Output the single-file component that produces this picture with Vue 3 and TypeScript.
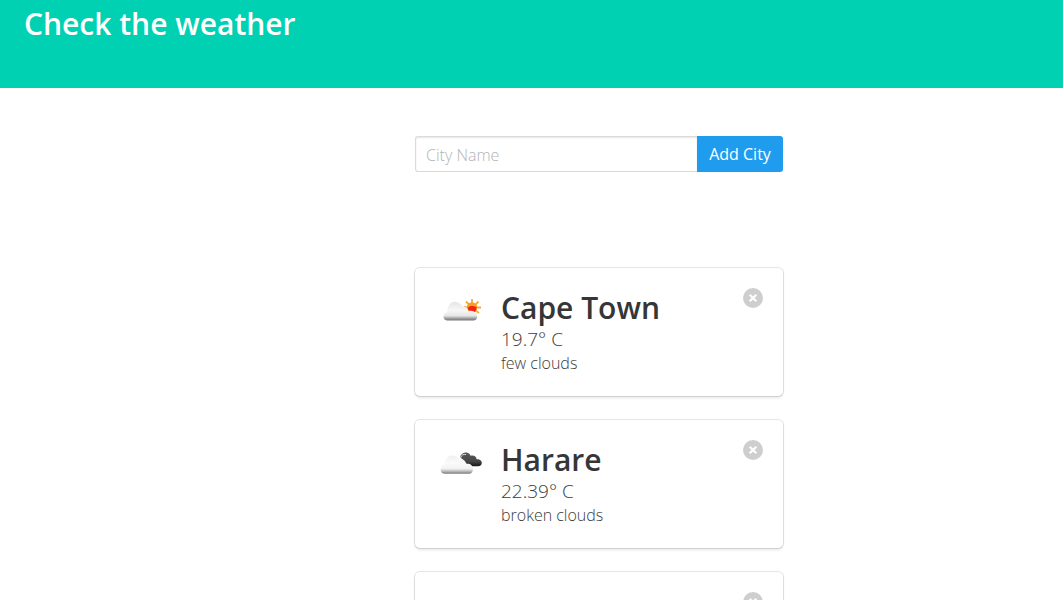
<script setup lang="ts">
import { ref } from 'vue'

interface CityWeather {
  id: number
  name?: string
  temperature?: string
  summary?: string
  icon?: 'few' | 'broken'
}

const draft = ref('')
const cities = ref<CityWeather[]>([
  { id: 1, name: 'Cape Town', temperature: '19.7° C', summary: 'few clouds', icon: 'few' },
  { id: 2, name: 'Harare', temperature: '22.39° C', summary: 'broken clouds', icon: 'broken' },
  { id: 3 },
])

function addCity(): void {
  const name = draft.value.trim()
  if (!name) return
  cities.value.push({ id: Date.now(), name })
  draft.value = ''
}

function removeCity(id: number): void {
  cities.value = cities.value.filter((city) => city.id !== id)
}
</script>

<template>
  <div class="page">
    <header class="hero">
      <h1 class="hero-title">Check the weather</h1>
    </header>

    <main class="layout">
      <div class="column">
        <form class="add-form" @submit.prevent="addCity">
          <input v-model="draft" class="city-input" type="text" placeholder="City Name" aria-label="City Name" />
          <button class="add-button" type="submit">Add City</button>
        </form>

        <section class="cards">
          <article v-for="city in cities" :key="city.id" class="card">
            <div class="figure">
              <svg v-if="city.icon === 'few'" viewBox="0 0 50 50" aria-hidden="true">
                <defs>
                  <linearGradient id="few-cloud" x1="0" y1="0" x2="0" y2="1">
                    <stop offset="0" stop-color="#e4e4e4" />
                    <stop offset="0.45" stop-color="#f7f7f7" />
                    <stop offset="0.75" stop-color="#e6e6e6" />
                    <stop offset="0.88" stop-color="#a2a2a2" />
                    <stop offset="1" stop-color="#747474" />
                  </linearGradient>
                </defs>
                <path
                  d="M37 11v5M31 13.500l3 3M43.500 13.500l-3 3M46 19.500h-5M44 25l-3.500-2.500M38 28v-5M29 18.500l4 1"
                  fill="none"
                  stroke="#f6a93b"
                  stroke-width="1.800"
                />
                <circle cx="37" cy="19.500" r="5.200" fill="#fa9a28" />
                <path d="M33 19.500C35 17.500 39 17.500 41.500 19.500C41.500 22.500 40 24.500 37.500 24.500C35 24.500 33 22.500 33 19.500Z" fill="#f32412" />
                <path
                  d="M12 32.500C9.700 32.500 8.400 30.700 8.400 28.600C8.400 26.400 9.900 24.900 12 24.500C12.100 18.400 15.400 13.800 20 13.800C23.500 13.800 26 16 27.200 18.300C30.400 18 32.700 20 33 23C36.600 22.100 42.300 23.800 42.300 28C42.300 31 40.700 32.500 38 32.500Z"
                  fill="url(#few-cloud)"
                />
              </svg>
              <svg v-else-if="city.icon === 'broken'" viewBox="0 0 50 50" aria-hidden="true">
                <defs>
                  <linearGradient id="broken-cloud" x1="0" y1="0" x2="0" y2="1">
                    <stop offset="0" stop-color="#f0f0f0" />
                    <stop offset="0.4" stop-color="#fbfbfb" />
                    <stop offset="0.72" stop-color="#f2f2f2" />
                    <stop offset="0.86" stop-color="#bcbcbc" />
                    <stop offset="1" stop-color="#777777" />
                  </linearGradient>
                  <linearGradient id="dark-cloud" x1="0" y1="0" x2="0" y2="1">
                    <stop offset="0" stop-color="#5b5b5b" />
                    <stop offset="0.65" stop-color="#454545" />
                    <stop offset="1" stop-color="#181818" />
                  </linearGradient>
                </defs>
                <path
                  d="M25 17.500C25.500 14.500 28.500 12.200 31.500 12.600C34 12.900 35.200 14.500 35.500 15.800C38.300 14.700 41.700 16.500 41.600 19.200C44.500 18.800 47 20.600 46.800 23C46.600 25.300 45 26.300 43 26.300H35C32 26 30 20 25 17.500Z"
                  fill="url(#dark-cloud)"
                />
                <path d="M25.500 18C26.500 15 28.500 13.800 31 14.600" fill="none" stroke="#dddddd" stroke-width="1" />
                <path
                  d="M10 33.800C7.300 33.800 5.600 32 5.600 29.700C5.600 27 7 25.600 9 25C9.200 19.500 13 15.500 17.500 15.500C21 15.500 23.500 17.500 24.500 19.500C28 18.800 30.500 20.500 31 24C35 23.300 38 25.500 38 29C38 32.200 36.500 33.800 34 33.800Z"
                  fill="url(#broken-cloud)"
                />
              </svg>
            </div>
            <div class="content">
              <h2 v-if="city.name" class="city">{{ city.name }}</h2>
              <p v-if="city.temperature" class="temperature">{{ city.temperature }}</p>
              <p v-if="city.summary" class="summary">{{ city.summary }}</p>
            </div>
            <button class="delete" type="button" aria-label="Remove city" @click="removeCity(city.id)">
              <svg viewBox="0 0 20 20" aria-hidden="true">
                <path d="M6.700 6.700L13.300 13.300M13.300 6.700L6.700 13.300" stroke="#ffffff" stroke-width="2.200" />
              </svg>
            </button>
          </article>
        </section>
      </div>
    </main>
  </div>
</template>

<style>
body {
  margin: 0;
  background: #ffffff;
}
</style>

<style scoped>
.page {
  font-family: 'Open Sans', 'Noto Sans', sans-serif;
  font-size: 16px;
  color: #3c3c3c;
}

.page *,
.page *::before {
  box-sizing: border-box;
}

.hero {
  padding: 6px 24px 46px;
  background: #00d1b2;
}

.hero-title {
  margin: 0;
  font-size: 30px;
  line-height: 36px;
  font-weight: 600;
  color: #ffffff;
}

.layout {
  display: grid;
  grid-template-columns: 415fr 368fr 280fr;
  padding: 48px 0;
}

.column {
  grid-column: 2;
}

.add-form {
  display: flex;
}

.city-input {
  flex: 1;
  min-width: 0;
  height: 36px;
  padding: 3px 10px 1px;
  border: 1px solid #dbdbdb;
  border-right: 0;
  border-radius: 3px 0 0 3px;
  box-shadow: inset 0 1px 2px rgba(10, 10, 10, 0.1);
  background: #ffffff;
  font: inherit;
  color: #363636;
  outline: none;
}

.city-input::placeholder {
  color: #b4b4b4;
  font-weight: 300;
  opacity: 1;
}

.add-button {
  width: 86px;
  height: 36px;
  padding: 0;
  border: 0;
  border-radius: 0 3px 3px 0;
  background: #209cee;
  font: inherit;
  color: #ffffff;
  white-space: nowrap;
  cursor: pointer;
}

.cards {
  display: flex;
  flex-direction: column;
  gap: 24px;
  margin-top: 96px;
}

.card {
  display: flex;
  align-items: flex-start;
  min-height: 128px;
  padding: 20px;
  border-radius: 5px;
  background: #ffffff;
  box-shadow: 0 2px 3px rgba(10, 10, 10, 0.1), 0 0 0 1px rgba(10, 10, 10, 0.1);
}

.figure {
  flex: none;
  width: 50px;
  height: 50px;
  margin-right: 16px;
}

.figure svg {
  display: block;
  width: 100%;
  height: 100%;
}

.content {
  flex: 1;
  min-width: 0;
}

.city {
  margin: 0;
  font-size: 30px;
  line-height: 40px;
  font-weight: 600;
  color: #363636;
}

.temperature {
  margin: 0;
  font-size: 19px;
  font-weight: 350;
  line-height: 22px;
}

.summary {
  margin: 0;
  font-size: 16px;
  font-weight: 350;
  line-height: 26px;
}

.delete {
  flex: none;
  width: 20px;
  height: 20px;
  padding: 0;
  border: 0;
  border-radius: 50%;
  background: #cecece;
  cursor: pointer;
}

.delete svg {
  display: block;
  width: 100%;
  height: 100%;
}
</style>
